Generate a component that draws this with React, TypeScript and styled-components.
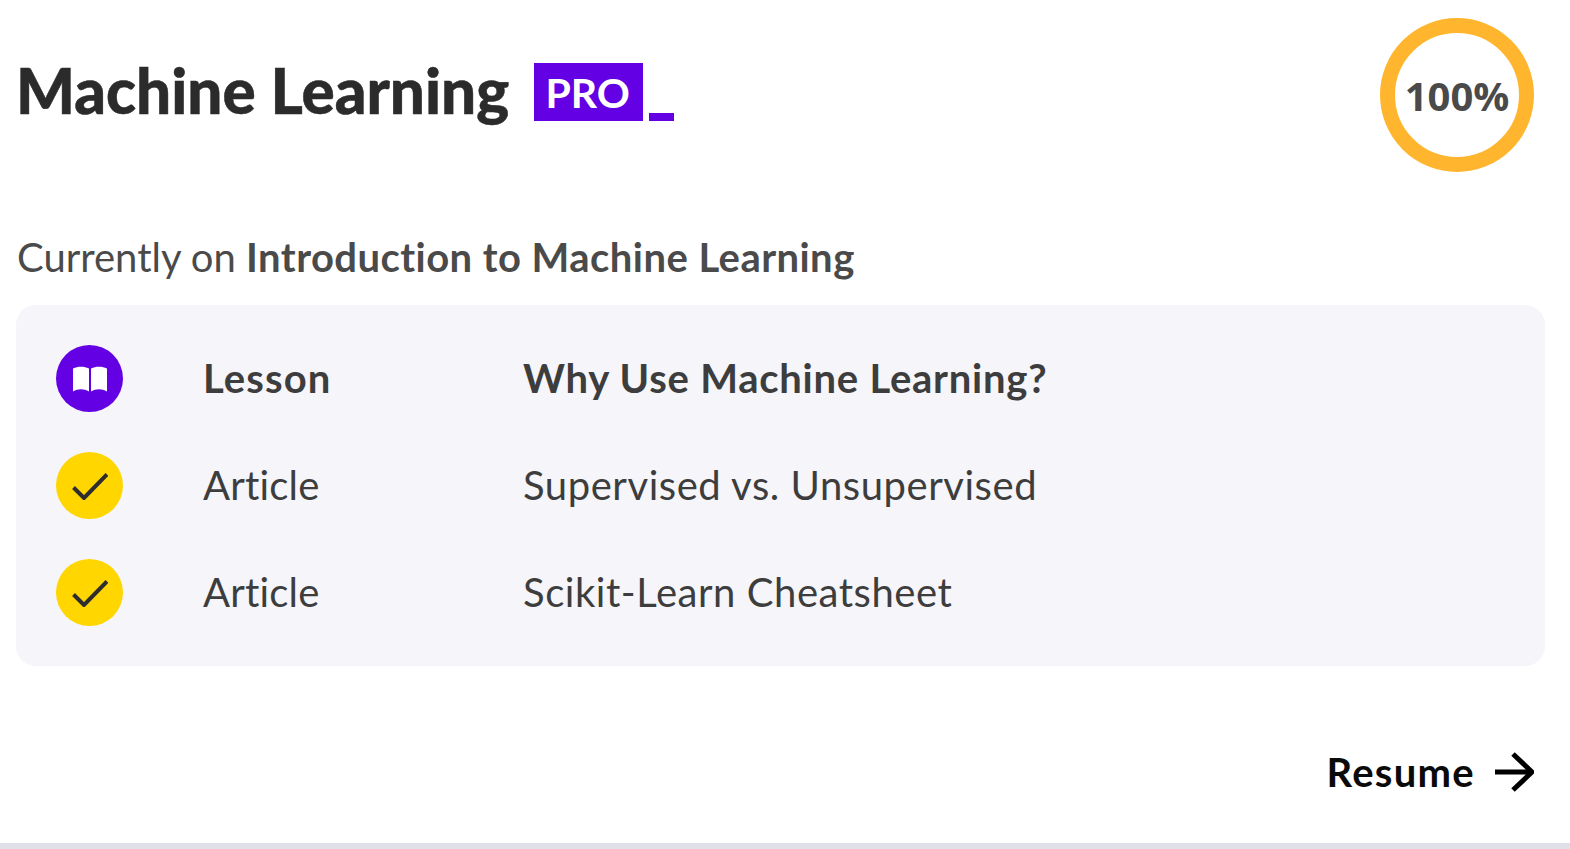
import React from 'react';
import styled, { createGlobalStyle } from 'styled-components';

const GlobalStyle = createGlobalStyle`
  html, body {
    margin: 0;
    padding: 0;
    background: #fff;
    overflow: hidden;
  }
`;

const Page = styled.div`
  width: 1570px;
  height: 849px;
  box-sizing: border-box;
  display: flex;
  flex-direction: column;
  border-bottom: 6px solid #e0e0e8;
  font-family: Lato, 'Noto Sans', sans-serif;
  font-variant-ligatures: none;
`;

const Header = styled.div`
  display: flex;
  justify-content: space-between;
  align-items: flex-start;
  height: 154px;
  padding: 18px 36px 0 16px;
`;

const TitleRow = styled.div`
  display: flex;
  align-items: flex-end;
  margin-top: 45px;
  height: 58px;
`;

const Title = styled.h1`
  margin: 0 25px 2px 0;
  font-size: 62px;
  line-height: 58px;
  font-weight: 900;
  -webkit-text-stroke: 0.5px #2b2b2b;
  color: #2b2b2b;
  white-space: nowrap;
`;

const ProBadge = styled.span`
  display: flex;
  align-items: center;
  justify-content: center;
  width: 109px;
  height: 58px;
  padding-right: 2px;
  box-sizing: border-box;
  background: #6400e4;
  color: #fff;
  font-size: 41px;
  font-weight: 700;
`;

const Cursor = styled.span`
  width: 25px;
  height: 8px;
  margin-left: 6px;
  background: #6400e4;
`;

const Ring = styled.div`
  width: 154px;
  height: 154px;
  box-sizing: border-box;
  border: 15px solid #ffb62e;
  border-radius: 50%;
  display: flex;
  align-items: center;
  justify-content: center;
  color: #4a4a4a;
  font-family: 'Open Sans', sans-serif;
  font-size: 40px;
  font-weight: 700;
`;

const Current = styled.p`
  margin: 62px 0 0 17px;
  height: 47px;
  font-size: 40px;
  line-height: 47px;
  font-weight: 400;
  color: #4a4a4a;
  white-space: nowrap;

  strong {
    font-weight: 700;
    letter-spacing: 0.45px;
  }
`;

const Panel = styled.div`
  box-sizing: border-box;
  width: 1529px;
  height: 361px;
  margin: 24px 0 0 16px;
  padding: 40px;
  display: flex;
  flex-direction: column;
  gap: 40px;
  background: #f5f5fa;
  border-radius: 20px;
`;

const Row = styled.div`
  display: grid;
  grid-template-columns: 147px 320px 1fr;
  align-items: center;
  height: 67px;
  font-size: 40px;
  color: #3d3d3d;
`;

const Circle = styled.span<{ $bg: string }>`
  width: 67px;
  height: 67px;
  border-radius: 50%;
  background: ${(p) => p.$bg};
  display: flex;
  align-items: center;
  justify-content: center;
`;

const Kind = styled.span<{ $bold?: boolean }>`
  margin-bottom: 2px;
  font-weight: ${(p) => (p.$bold ? 700 : 400)};
  letter-spacing: ${(p) => (p.$bold ? '1.1px' : '0.2px')};
  white-space: nowrap;
`;

const Name = styled.span<{ $bold?: boolean }>`
  margin-bottom: 2px;
  font-weight: ${(p) => (p.$bold ? 700 : 400)};
  letter-spacing: ${(p) => (p.$bold ? '0.76px' : '0.55px')};
  white-space: nowrap;
`;

const Footer = styled.div`
  display: flex;
  justify-content: flex-end;
  align-items: center;
  gap: 19px;
  margin-top: 84px;
  padding-right: 36px;
  height: 44px;
`;

const Resume = styled.span`
  font-size: 40px;
  font-weight: 700;
  letter-spacing: 1.3px;
  color: #0a0a0a;
`;

const BookIcon = () => (
  <svg width="34" height="26" viewBox="0 0 34 26">
    <path d="M0 2.5C5 0 11 0 16 2.5V25.5C11 22.5 5 22.5 0 25.5Z" fill="#fff" />
    <path d="M18 2.5C23 0 29 0 34 2.5V25.5C29 22.5 23 22.5 18 25.5Z" fill="#fff" />
  </svg>
);

const CheckIcon = () => (
  <svg width="36" height="28" viewBox="0 0 36 28">
    <path d="M1.5 15.5L12 26L35 2.5" fill="none" stroke="#2d2d2d" strokeWidth="4" />
  </svg>
);

const ArrowIcon = () => (
  <svg width="40" height="40" viewBox="0 0 40 40">
    <path d="M1 20H38M19 2L38 20L19 38" fill="none" stroke="#000" strokeWidth="5" />
  </svg>
);

const items = [
  { kind: 'Lesson', title: 'Why Use Machine Learning?', active: true },
  { kind: 'Article', title: 'Supervised vs. Unsupervised', active: false },
  { kind: 'Article', title: 'Scikit-Learn Cheatsheet', active: false },
];

const App: React.FC = () => {
  return (
    <Page>
      <GlobalStyle />
      <Header>
        <TitleRow>
          <Title>Machine Learning</Title>
          <ProBadge>PRO</ProBadge>
          <Cursor />
        </TitleRow>
        <Ring>100%</Ring>
      </Header>
      <Current>
        Currently on <strong>Introduction to Machine Learning</strong>
      </Current>
      <Panel>
        {items.map((item) => (
          <Row key={item.title}>
            <Circle $bg={item.active ? '#6400e4' : '#ffd600'}>
              {item.active ? <BookIcon /> : <CheckIcon />}
            </Circle>
            <Kind $bold={item.active}>{item.kind}</Kind>
            <Name $bold={item.active}>{item.title}</Name>
          </Row>
        ))}
      </Panel>
      <Footer>
        <Resume>Resume</Resume>
        <ArrowIcon />
      </Footer>
    </Page>
  );
};

export default App;
